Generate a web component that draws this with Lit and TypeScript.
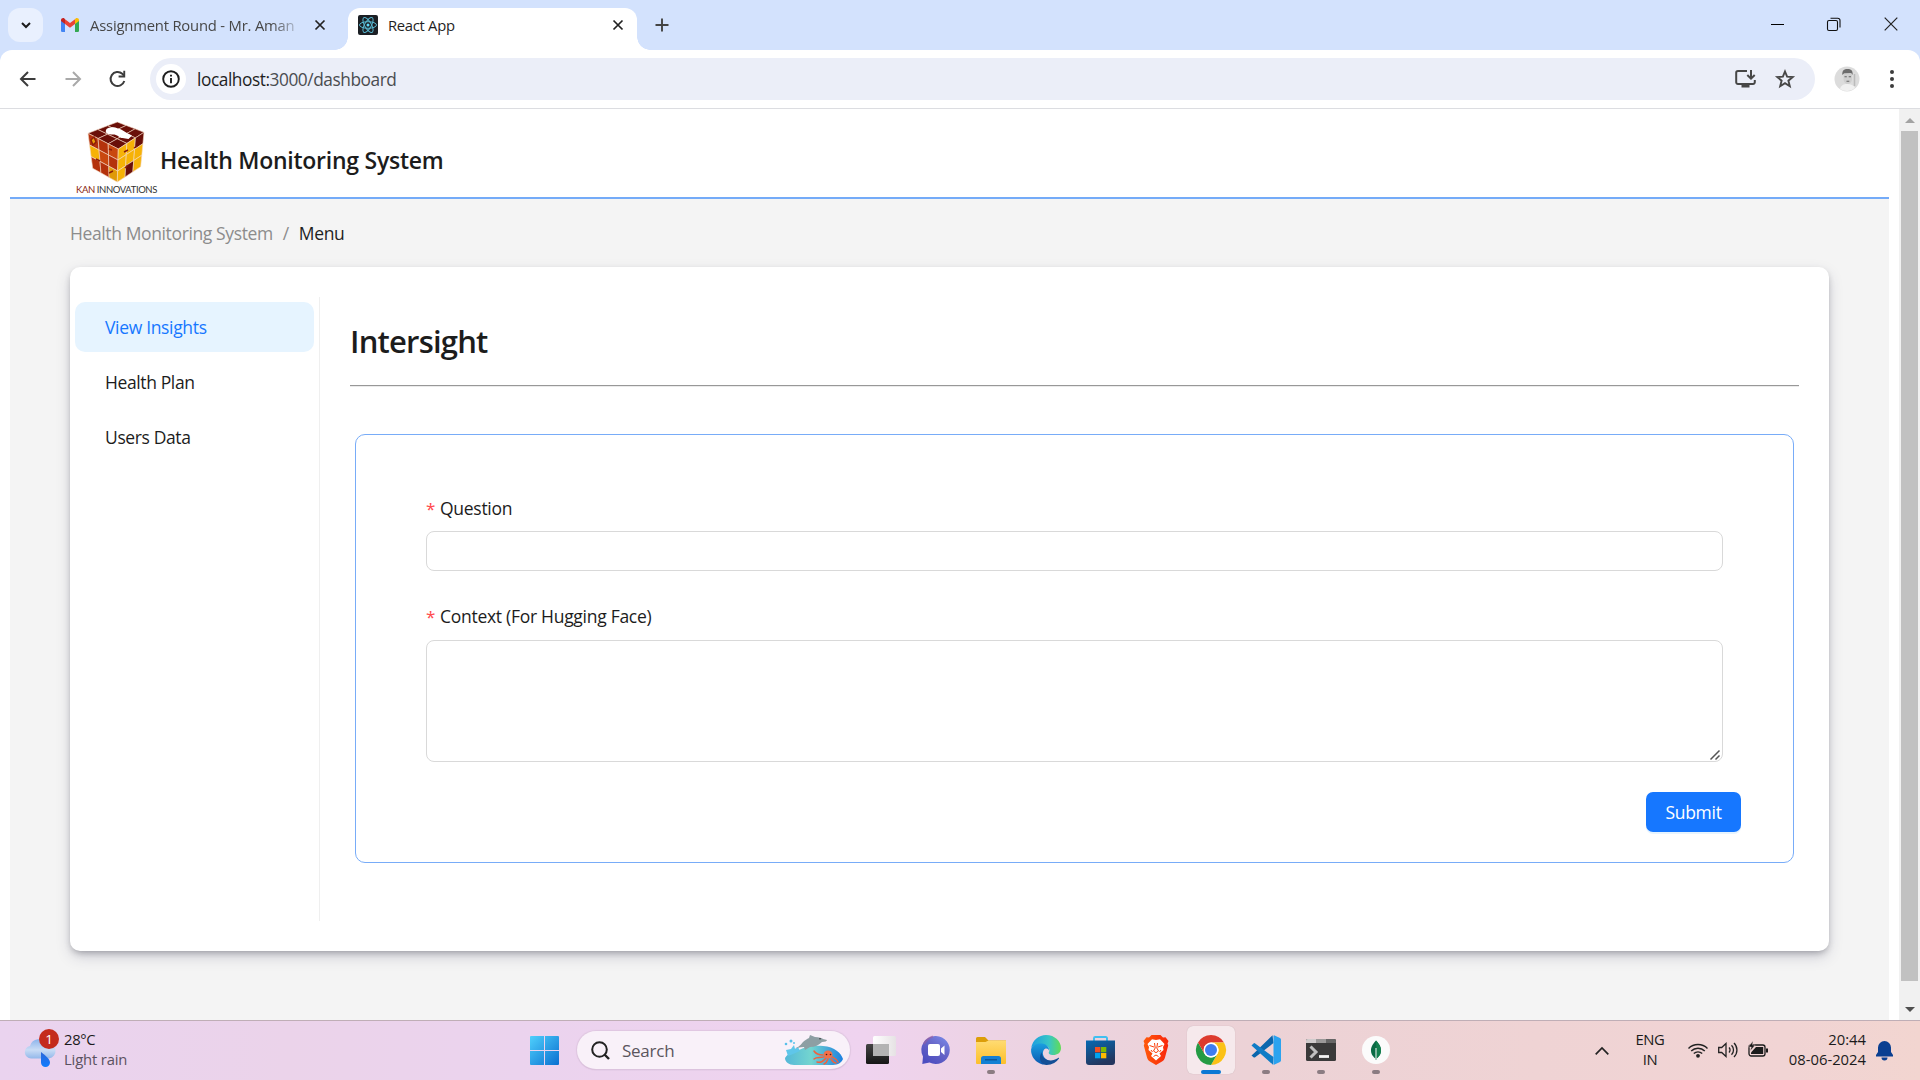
import { LitElement, html, css, svg } from "lit";
import { customElement } from "lit/decorators.js";

const base = css`
  :host { display: block; font-family: "Open Sans", "Noto Sans", sans-serif; color: #1f1f1f; }
  * { box-sizing: border-box; }
  svg { display: block; flex: none; overflow: visible; }
  span { white-space: nowrap; }
`;

type Pt = [number, number];

const mix = (a: Pt, b: Pt, t: number): Pt => [a[0] + (b[0] - a[0]) * t, a[1] + (b[1] - a[1]) * t];

/** Splits the quad a-b / d-c in a 3×3 mesh of coloured tiles. */
const face = (a: Pt, b: Pt, c: Pt, d: Pt, fills: string[]) =>
  fills.map((fill, i) => {
    const u = (i % 3) / 3;
    const v = Math.floor(i / 3) / 3;
    const at = (x: number, y: number) => mix(mix(a, b, x), mix(d, c, x), y).map((n) => n.toFixed(2)).join(",");
    const w = 1 / 3;
    return svg`<polygon points="${at(u, v)} ${at(u + w, v)} ${at(u + w, v + w)} ${at(u, v + w)}" fill=${fill} stroke="#f3d9c4" stroke-width=".6"/>`;
  });

const M = "#6a0f08", R = "#b4320c", O = "#c9480f", Y = "#f6b206", G = "#e09a08";

const cube = html`<svg width="60" height="63" viewBox="0 0 60 63">
  ${face([31.3, 2], [58, 12.3], [32.3, 29], [2, 13.3], [M, M, M, M, M, M, M, M, M])}
  ${face([2, 13.3], [32.3, 29], [31.3, 62], [6.7, 48.3], [R, R, O, Y, O, R, R, R, G])}
  ${face([32.3, 29], [58, 12.3], [54.7, 46.7], [31.3, 62], [Y, Y, M, Y, Y, Y, Y, M, Y])}
  <path d="M20 10c1-3 8-3.500 12-1.500 4 .5 6 3 9 4.500l5 2.500-3.500 3.500-6-1c-3 0-4-2.500-8-3.500-4 .5-10-.5-8.500-4.500z" fill="#fff"/>
  <path d="M5 20l3-3 2 5-3 3zM23 29l3 1M38 32l4-2M39 48l3-3M10 39l4 2M23 53l4-2M48 28l3-2" stroke="#8b1d08" stroke-width="1.400" fill="#e89a08"/>
</svg>`;

@customElement("browser-chrome")
export class BrowserChrome extends LitElement {
  static styles = [base, css`
    .strip { height: 50px; background: #d3e2fd; display: flex; align-items: flex-start; padding: 8px 0 0 8px; }
    .drop { width: 35px; height: 34px; border-radius: 12px; background: #e9f0fe; display: grid; place-items: center; }
    .tab { display: flex; align-items: center; height: 34px; font-size: 14.8px; letter-spacing: -.19px; }
    .idle { width: 305px; padding-left: 18px; color: #474747; }
    .idle .name { margin-left: 11px; width: 206px; overflow: hidden; -webkit-mask-image: linear-gradient(90deg, #000 88%, rgba(0,0,0,.25)); mask-image: linear-gradient(90deg, #000 88%, rgba(0,0,0,.25)); }
    .idle .x { margin-left: 19px; }
    .active { position: relative; width: 289px; height: 42px; padding: 0 14px 8px 10px; background: #fff; border-radius: 12px 12px 0 0; }
    .active::before, .active::after { content: ""; position: absolute; bottom: 0; width: 13px; height: 13px; }
    .active::before { left: -13px; background: radial-gradient(circle at 0 0, transparent 12.5px, #fff 13px); }
    .active::after { right: -13px; background: radial-gradient(circle at 100% 0, transparent 12.5px, #fff 13px); }
    .active .name { margin-left: 10px; flex: 1; letter-spacing: -.3px; }
    .plus { margin: 10px 0 0 18px; }
    .win { margin: 9px 22px 0 auto; display: flex; gap: 43px; }
    .under { background: #d3e2fd; }
    .bar { height: 59px; background: #fff; border-bottom: 1px solid #dcdde1; border-radius: 12px 12px 0 0; display: flex; align-items: center; padding: 0 20px 0 18px; }
    .nav { display: flex; gap: 24.500px; width: 132px; }
    .omni { flex: 1; height: 42px; border-radius: 21px; background: #ebeef8; display: flex; align-items: center; padding: 0 20px 0 6px; font-size: 17.300px; letter-spacing: -.44px; color: #4a4c50; }
    .info { width: 30px; height: 30px; border-radius: 50%; background: #fff; display: grid; place-items: center; margin-right: 11px; }
    .url { flex: 1; display: flex; }
    .host { color: #1f1f1f; }
    .acts { display: flex; gap: 19px; align-items: center; }
    .avatar { margin: 0 24px 0 19px; }
  `];

  render() {
    const x = html`<svg class="x" width="10" height="10" viewBox="0 0 10 10"><path d="M.5.5l9 9M9.5.5l-9 9" stroke="#222" stroke-width="1.7"/></svg>`;
    return html`
      <div class="strip">
        <div class="drop"><svg width="10" height="7" viewBox="0 0 10 7"><path d="M1 1l4 4 4-4" fill="none" stroke="#1b1b1b" stroke-width="2"/></svg></div>
        <div class="tab idle">
          <svg width="18" height="14" viewBox="0 0 18 14">
            <path d="M0 2v10.700A1.300 1.300 0 0 0 1.300 14H4V5.500z" fill="#4285f4"/><path d="M18 2v10.700a1.300 1.300 0 0 1-1.300 1.300H14V5.500z" fill="#34a853"/>
            <path d="M14 1.200V6l4-3V2c0-2-2.200-2.600-3.400-1.600z" fill="#fbbc04"/><path d="M4 6V1.200L9 5l5-3.800V6L9 9.800z" fill="#ea4335"/><path d="M0 2v1l4 3V1.200L3.400.4C2.200-.5 0 .2 0 2z" fill="#c5221f"/>
          </svg>
          <span class="name">Assignment Round - Mr. Aman</span>${x}
        </div>
        <div class="tab active">
          <svg width="20" height="20" viewBox="0 0 20 20"><rect width="20" height="20" rx="2" fill="#1b1f24"/>
            <g fill="none" stroke="#58b7d0" stroke-width="1"><ellipse cx="10" cy="10" rx="8.500" ry="3.300"/><ellipse cx="10" cy="10" rx="8.500" ry="3.300" transform="rotate(60 10 10)"/><ellipse cx="10" cy="10" rx="8.500" ry="3.300" transform="rotate(120 10 10)"/></g>
            <circle cx="10" cy="10" r="1.500" fill="#61dafb"/></svg>
          <span class="name">React App</span>${x}
        </div>
        <svg class="plus" width="14" height="14" viewBox="0 0 14 14"><path d="M7 .5v13M.5 7h13" stroke="#444" stroke-width="1.900"/></svg>
        <div class="win">
          <svg width="13" height="14" viewBox="0 0 13 14"><path d="M0 7.500h13" stroke="#000"/></svg>
          <svg width="14" height="14" viewBox="0 0 14 14"><rect x=".5" y="3.500" width="10" height="10" rx="1.500" fill="none" stroke="#111" stroke-width="1.100"/><path d="M3.500 1.200h7.200a2.300 2.300 0 0 1 2.300 2.300V10.500" fill="none" stroke="#111" stroke-width="1.100"/></svg>
          <svg width="14" height="14" viewBox="0 0 14 14"><path d="M.7.7l12.600 12.600M13.300.7L.7 13.300" stroke="#222" stroke-width="1.200"/></svg>
        </div>
      </div>
      <div class="under"><div class="bar">
        <div class="nav">
          <svg width="20" height="20" viewBox="0 0 20 20"><path d="M17.500 10H3.500M10 3L3 10l7 7" fill="none" stroke="#3c3c3c" stroke-width="2"/></svg>
          <svg width="20" height="20" viewBox="0 0 20 20"><path d="M2.500 10h14M10 3l7 7-7 7" fill="none" stroke="#a9a9a9" stroke-width="2"/></svg>
          <svg width="20" height="20" viewBox="0 0 20 20"><path d="M17.300 12A7 7 0 1 1 15.300 4.800L17 6.500" fill="none" stroke="#3c3c3c" stroke-width="2"/><path d="M18.200 1.800v6.600h-6.600v-1.900h4.700v-4.700z" fill="#3c3c3c"/></svg>
        </div>
        <div class="omni">
          <div class="info"><svg width="18" height="18" viewBox="0 0 18 18"><circle cx="9" cy="9" r="7.800" fill="none" stroke="#1f1f1f" stroke-width="1.900"/><path d="M9 8v5.200M9 4.700v1.900" stroke="#1f1f1f" stroke-width="1.900"/></svg></div>
          <div class="url"><span><span class="host">localhost:</span>3000/dashboard</span></div>
          <div class="acts">
            <svg width="21" height="20" viewBox="0 0 21 20"><path d="M12 2H3a1.800 1.800 0 0 0-1.800 1.800v9.400A1.800 1.800 0 0 0 3 15h15a1.800 1.800 0 0 0 1.800-1.800V11" fill="none" stroke="#474747" stroke-width="2"/><path d="M6.500 15h8v3.500h-8z" fill="#474747"/><path d="M16 1v8M12.300 6l3.700 3.700L19.700 6" fill="none" stroke="#474747" stroke-width="2"/></svg>
            <svg width="20" height="20" viewBox="0 0 20 20"><path d="M10 2.500l2.100 5.200 5.600.400-4.300 3.600 1.400 5.500L10 14.200l-4.800 3 1.400-5.500-4.300-3.600 5.600-.4z" fill="none" stroke="#474747" stroke-width="1.900"/></svg>
          </div>
        </div>
        <svg class="avatar" width="26" height="26" viewBox="0 0 26 26"><circle cx="13" cy="13" r="12.500" fill="#dcdcdc"/><path d="M6 23c1-4 4-5 7-5s7 1 8 4a12.500 12.500 0 0 1-15 1z" fill="#f1f1f1"/><path d="M9.500 7h8.500v6c0 3-2.500 5-4.300 5S9.500 16 9.500 13z" fill="#cfcfcf"/><path d="M8.300 9C8 4.500 10 3 13.500 3S19 4.500 18.700 9l-1.500-2-7 .3z" fill="#6c6c6c"/><path d="M10.500 10.700h2.300M14.700 10.700H17M12.500 15.300h2.800" stroke="#666" stroke-width="1.100"/><path d="M20.500 8v12" stroke="#bbb" stroke-width="1.500"/></svg>
        <svg width="16" height="20" viewBox="0 0 16 20"><g fill="#3c3c3c"><circle cx="8" cy="3" r="2"/><circle cx="8" cy="10" r="2"/><circle cx="8" cy="17" r="2"/></g></svg>
      </div></div>`;
  }
}

@customElement("health-page")
export class HealthPage extends LitElement {
  static styles = [base, css`
    .view { height: 911px; display: flex; background: #fff; font-size: 17.500px; letter-spacing: -.38px; color: #1c1c1c; }
    .page { flex: 1; margin: 0 10px; background: #f4f4f4; }
    .head { height: 90px; background: #fff; border-bottom: 2px solid #74abf8; display: flex; padding-left: 66px; }
    .brand { width: 84px; padding-top: 11px; display: flex; flex-direction: column; align-items: flex-start; }
    .brand svg { margin-left: 10px; }
    .brand .cap { font: 9.500px/12px "Lato", sans-serif; letter-spacing: -.4px; color: #333; margin-top: 1px; }
    .cap b { font-weight: 400; color: #8c1f10; }
    .title { font-size: 23px; font-weight: 600; line-height: 30px; margin: 36px 0 0; letter-spacing: -.25px; }
    .crumbs { display: flex; height: 68px; align-items: center; padding-left: 60px; color: #8c8c8c; gap: 10px; }
    .crumbs .now { color: #1f1f1f; }
    .card { margin: 0 60px; height: 684px; border-radius: 10px; background: #fff; padding: 30px; padding-left: 0; display: flex;
      box-shadow: rgba(50,50,93,.25) 0 6px 15px -2px, rgba(0,0,0,.3) 0 3px 7px -2px; }
    .menu { width: 250px; border-right: 1px solid #efefef; padding: 5px 5px; display: flex; flex-direction: column; gap: 5px; }
    .item { height: 50px; border-radius: 10px; display: flex; align-items: center; padding-left: 30px; }
    .on { background: #e6f4ff; color: #1677ff; letter-spacing: -.33px; }
    .main { flex: 1; padding-left: 30px; }
    .h1 { font-size: 31px; font-weight: 600; line-height: 40px; margin-top: 24px; display: block; letter-spacing: -.8px; }
    .rule { height: 2px; margin-top: 24px; border-top: 1px solid #989898; border-bottom: 1px solid #ebebeb; }
    .form { margin: 47px 5px 0; height: 429px; border: 1px solid #78acf8; border-radius: 10px; padding: 58px 70px 0; display: flex; flex-direction: column; letter-spacing: -.28px; }
    .lab { height: 30px; display: flex; align-items: center; gap: 6px; }
    .star { color: #ff4d4f; width: 8px; font: 17px/17px "Noto Sans", sans-serif; }
    .input { height: 40px; border: 1px solid #d9d9d9; border-radius: 8px; margin: 8px 0 30px; }
    .area { height: 122px; border: 1px solid #d9d9d9; border-radius: 8px; margin: 9px 0 30px; display: flex; align-items: flex-end; justify-content: flex-end; padding: 1px 2px; }
    .btn { align-self: flex-end; margin-right: -18px; width: 95px; height: 40px; border-radius: 7px; background: #1677ff; color: #fff; display: grid; place-items: center; box-shadow: 0 2px 0 rgba(5,145,255,.1); }
    .scroll { width: 21px; background: #f1f1f1; display: flex; flex-direction: column; align-items: center; }
    .up { margin: 9px 0 8px; }
    .thumb { width: 17px; height: 850px; background: #c1c1c1; }
    .down { margin-top: 26px; }
  `];

  render() {
    return html`<div class="view">
      <div class="page">
        <div class="head">
          <div class="brand">${cube}<span class="cap"><b>KAN</b> INNOVATIONS</span></div>
          <span class="title">Health Monitoring System</span>
        </div>
        <div class="crumbs"><span>Health Monitoring System</span><span>/</span><span class="now">Menu</span></div>
        <div class="card">
          <div class="menu">
            <div class="item on">View Insights</div>
            <div class="item">Health Plan</div>
            <div class="item">Users Data</div>
          </div>
          <div class="main">
            <span class="h1">Intersight</span>
            <div class="rule"></div>
            <div class="form">
              <div class="lab"><span class="star">*</span><span>Question</span></div>
              <div class="input"></div>
              <div class="lab"><span class="star">*</span><span>Context (For Hugging Face)</span></div>
              <div class="area"><svg width="10" height="10" viewBox="0 0 10 10"><path d="M.5 9.500l9-9M5.500 9.500l4-4" stroke="#555" stroke-width="1.500"/></svg></div>
              <div class="btn">Submit</div>
            </div>
          </div>
        </div>
      </div>
      <div class="scroll">
        <svg class="up" width="10" height="5" viewBox="0 0 10 5"><path d="M0 5l5-5 5 5z" fill="#a3a3a3"/></svg>
        <div class="thumb"></div>
        <svg class="down" width="10" height="5" viewBox="0 0 10 5"><path d="M0 0l5 5 5-5z" fill="#505050"/></svg>
      </div>
    </div>`;
  }
}

const icons = {
  taskview: svg`<svg width="30" height="28" viewBox="0 0 30 28"><defs><linearGradient id="tv" x2="0" y2="1"><stop stop-color="#444"/><stop offset="1" stop-color="#161616"/></linearGradient><linearGradient id="tw"><stop stop-color="#fff"/><stop offset="1" stop-color="#e6e2e4"/></linearGradient></defs><rect y="8" width="23" height="20" rx="1.500" fill="url(#tv)"/><rect x="7" width="23" height="20" rx="1.500" fill="url(#tw)"/><rect x="7" y="8" width="16" height="12" fill="#b3b3b3"/></svg>`,
  chat: svg`<svg width="30" height="28" viewBox="0 0 30 28"><defs><linearGradient id="ch" x1="1" y1="0" x2=".3" y2="1"><stop stop-color="#7b8fee"/><stop offset=".5" stop-color="#6765c7"/><stop offset="1" stop-color="#4c4ec0"/></linearGradient></defs><path d="M15 0a14 14 0 1 1-6.500 26.500L1.300 28 2 20.500A14 14 0 0 1 15 0z" fill="url(#ch)"/><path d="M3 8A14 14 0 0 1 12 .5" stroke="#9a5f9f" stroke-width="2" opacity=".6" fill="none"/><rect x="7" y="8" width="12" height="12" rx="2" fill="#fff"/><path d="M20 12.500l3.500-3v9.500l-3.500-3z" fill="#fff"/></svg>`,
  folder: svg`<svg width="30" height="27" viewBox="0 0 30 27"><defs><linearGradient id="fo" x2="0" y2="1"><stop stop-color="#ffdb72"/><stop offset="1" stop-color="#fcbf2a"/></linearGradient></defs><path d="M0 1.500A1.500 1.500 0 0 1 1.500 0H9l3.500 3.500H30v5H0z" fill="#dc9e09"/><path d="M0 5h9.500l3-1.500H30V26a1 1 0 0 1-1 1H1a1 1 0 0 1-1-1z" fill="url(#fo)"/><path d="M5 27v-5.500A2.500 2.500 0 0 1 7.500 19h15a2.500 2.500 0 0 1 2.500 2.500V27z" fill="#1480d4"/><path d="M9 22.800h12" stroke="#0b4f8c" stroke-width="1.200"/></svg>`,
  edge: svg`<svg width="30" height="30" viewBox="0 0 30 30"><defs><linearGradient id="ed"><stop stop-color="#1c9de0"/><stop offset=".6" stop-color="#38c6c6"/><stop offset="1" stop-color="#62dc54"/></linearGradient><linearGradient id="ee" x2="0" y2="1"><stop stop-color="#1a9fe0"/><stop offset="1" stop-color="#0b58b0"/></linearGradient></defs><path d="M.2 13C1.500 5 8 0 15 0c9 0 15 6.500 15 13 0 5-4 7-7.500 7-4 0-5.500-1.500-4.500-3 1-2 .5-6-4.500-7C8 9 2 10 .2 13z" fill="url(#ed)"/><path d="M.1 14C1.500 10.500 5.500 8 10.500 8.500c5 .500 8 3.500 7.500 7-.5-2-4-3-5.500 0-2 4 1 9.500 7 10.500-2 2.500-5 4-8 3.500A15 15 0 0 1 .1 14z" fill="url(#ee)"/><path d="M11 17c-1 5 4 9 9 8.500 4-.5 6-2 7.500-2.700.5-.2.800.2.500.7A15 15 0 0 1 15 30c-6-1-8-8-4-13z" fill="#134f96"/></svg>`,
  store: svg`<svg width="29" height="29" viewBox="0 0 29 29"><defs><linearGradient id="st" x2=".4" y2="1"><stop stop-color="#0669b2"/><stop offset="1" stop-color="#23365e"/></linearGradient></defs><path d="M8 6V2.200A1.200 1.200 0 0 1 9.200 1h10.600A1.200 1.200 0 0 1 21 2.200V6" fill="none" stroke="#41bff0" stroke-width="2"/><path d="M0 4.500h29V26a3 3 0 0 1-3 3H3a3 3 0 0 1-3-3z" fill="url(#st)"/><rect x="9" y="11" width="5.300" height="5.300" fill="#f25022"/><rect x="15" y="11" width="5.300" height="5.300" fill="#7fba00"/><rect x="9" y="17" width="5.300" height="5.300" fill="#00a4ef"/><rect x="15" y="17" width="5.300" height="5.300" fill="#ffb900"/></svg>`,
  brave: svg`<svg width="26" height="30" viewBox="0 0 26 30"><defs><linearGradient id="br"><stop stop-color="#ff5a0a"/><stop offset="1" stop-color="#f8250c"/></linearGradient></defs><path d="M8.500 0h9l2.500 2.500 2.500-.300L25.500 6l-1 2.500.7 2L22 22.500c-.5 2-1.500 3-3 4L13 30l-6-3.500c-1.500-1-2.500-2-3-4L.8 10.500l.7-2L.5 6l3-3.800L6 2.500z" fill="url(#br)"/><path d="M13 5l4-.8L21.500 9l-1.500 3 .5 3-4 3.500L18 21l-5 4.500L8 21l1.500-2.500-4-3.500.5-3L4.500 9 9 4.200z" fill="#fff"/><path d="M6.500 10.500l4.500 1.500M19.500 10.500L15 12M11.500 8l.7 5-1.700 3 2.500 1.700L15.500 16l-1.700-3 .7-5M8 15l1.500 2M18 15l-1.500 2M10.500 21.500L13 20l2.500 1.500" fill="none" stroke="#fb3f0b" stroke-width="1"/></svg>`,
  chrome: svg`<svg width="30" height="30" viewBox="-15 -15 30 30"><circle r="15" fill="#fff"/><path d="M-13-7.500A15 15 0 0 1 13-7.500H0A7.500 7.500 0 0 0-6.500-3.750z" fill="#dd3b2e"/><path d="M13-7.500A15 15 0 0 1 0 15L6.500 3.750A7.500 7.500 0 0 0 0-7.500z" fill="#fbc116"/><path d="M0 15A15 15 0 0 1-13-7.500L-6.500 3.750A7.500 7.500 0 0 0 6.500 3.750z" fill="#259b44"/><path d="M-13-7.500L-6.500 3.750V-3.750L0-7.500z" fill="#dd3b2e"/><circle r="7.500" fill="#fff"/><circle r="6" fill="#3f7df0"/></svg>`,
  code: svg`<svg width="30" height="30" viewBox="0 0 30 30"><path d="M21.500.3L3 18.300 .5 20.500l2 1.700a1.300 1.300 0 0 0 1.700 0L22.500 8z" fill="#0a66ad"/><path d="M22 29.800L.5 10.500l2-2a1.300 1.300 0 0 1 1.700-.1L22.500 22z" fill="#0f7cc6"/><path d="M21.500.2c.5-.3 1-.2 1.500 0l6 2.800c.6.300 1 .9 1 1.500v21c0 .6-.4 1.200-1 1.500l-6 2.800c-.5.200-1 .3-1.500 0 .7.300 1.500-.3 1.500-1V1.200c0-.7-.8-1.300-1.500-1z" fill="#2ba3ef"/><path d="M22.500 1v28h1V1z" fill="#2ba3ef"/></svg>`,
  term: svg`<svg width="30" height="22" viewBox="0 0 30 22"><rect width="30" height="22" rx="1.500" fill="#3a3a3a"/><path d="M0 4V1.500A1.500 1.500 0 0 1 1.500 0H10v4z" fill="#d0cccd"/><path d="M10 0h10v4H10z" fill="#9b9999"/><path d="M20 0h8.500A1.500 1.500 0 0 1 30 1.500V4H20z" fill="#666"/><path d="M4.500 7.500l5.500 5.500-5.500 5.500" fill="none" stroke="#bfbfbf" stroke-width="3"/><path d="M13 17.500h10" stroke="#f2f2f2" stroke-width="2.800"/></svg>`,
  mongo: svg`<svg width="28" height="28" viewBox="0 0 28 28"><circle cx="14" cy="14" r="14" fill="#fbfbfb"/><path d="M14 4.500c4 4.500 5 7 5 10 0 4-2.500 6.500-4.500 8v1.500h-1V22.500c-2-1.500-4.500-4-4.500-8 0-3 1-5.500 5-10z" fill="#0a6b45"/><path d="M14 4.500c4 4.500 5 7 5 10 0 4-2.500 6.500-4.500 8z" fill="#13804f"/><path d="M14 12v12" stroke="#c3dccf" stroke-width="1.300"/></svg>`,
};

@customElement("task-bar")
export class TaskBar extends LitElement {
  static styles = [base, css`
    .bar { height: 60px; border-top: 1px solid #bfaeb6; display: flex; align-items: center; font-size: 14.800px; letter-spacing: -.05px; line-height: 20px; color: #1b1b1b;
      background: linear-gradient(90deg, #ead3ef 0, #ebd3ea 15%, #ebd3ee 27%, #efd3ef 45%, #ecd3df 55%, #ecd2d6 65%, #efd3d4 80%, #f1d4d4 93%, #f2d5d0 100%); }
    .weather { width: 492px; margin-left: 25px; display: flex; align-items: center; gap: 9px; letter-spacing: -.3px; }
    .two { display: flex; flex-direction: column; padding-bottom: 4px; }
    .dim { color: #5a5260; letter-spacing: -.15px; }
    .slot { width: 55px; height: 59px; display: flex; flex-direction: column; align-items: center; justify-content: center; position: relative; }
    .run::after { content: ""; position: absolute; left: 24px; bottom: 6px; width: 8px; height: 4px; border-radius: 2px; background: #8b7c82; }
    .cur::before { content: ""; position: absolute; inset: 5px 3px 6px 4px; border-radius: 6px; background: #f6e9ec; box-shadow: 0 0 1px rgba(0,0,0,.2); }
    .cur::after { content: ""; position: absolute; left: 18px; bottom: 6px; width: 20px; height: 4px; border-radius: 2px; background: #0a78d4; }
    .slot svg { margin-bottom: 1px; }
    .cur svg { position: relative; }
    .search { width: 273px; height: 38px; border-radius: 19px; margin: 0 3px 1px 5px; background: #f9f1f9; box-shadow: 0 0 1px 1px #dfc6e0, 0 1px 1px #bba3c0; display: flex; align-items: center; padding: 0 6px 0 14px; font-size: 17px; letter-spacing: -.25px; color: #5b555d; }
    .hint { flex: 1; padding: 1px 0 0 12px; }
    .tray { flex: 1; display: flex; align-items: center; justify-content: flex-end; padding-right: 27px; }
    .lang { width: 44px; margin: 0 16px 0 19px; align-items: center; letter-spacing: -.4px; }
    .when { width: 83px; align-items: flex-end; margin: 0 10px 0 15px; letter-spacing: 0; }
    .sys { display: flex; gap: 10px; align-items: center; padding-bottom: 2px; }
    .bell { margin-bottom: 1px; }
  `];

  render() {
    const slot = (icon: unknown, cls = "") => html`<div class="slot ${cls}">${icon}</div>`;
    return html`<div class="bar">
      <div class="weather">
        <svg width="30" height="40" viewBox="0 0 30 40"><defs><linearGradient id="cl" x2="0" y2="1"><stop stop-color="#8db4ec"/><stop offset=".55" stop-color="#c9dcf5"/><stop offset="1" stop-color="#93b8ea"/></linearGradient><linearGradient id="dr" x2="0" y2="1"><stop stop-color="#2c66d8"/><stop offset="1" stop-color="#0f7dff"/></linearGradient></defs>
          <path d="M6 27.500A6.300 6.300 0 0 1 5 15 9.500 9.500 0 0 1 22 12.500a7.500 7.500 0 0 1 2 15z" fill="url(#cl)"/><path d="M16 21c5 4 9 7 9 10.500a4.400 4.400 0 0 1-9 0z" fill="url(#dr)"/>
          <circle cx="24" cy="8" r="10" fill="#c42b1c"/><text x="24" y="13" text-anchor="middle" font-size="13.500" fill="#fff">1</text></svg>
        <div class="two"><span>28°C</span><span class="dim">Light rain</span></div>
      </div>
      ${slot(html`<svg width="29" height="29" viewBox="0 0 29 29"><defs><linearGradient id="wi" x2="1" y2="1"><stop stop-color="#4fd0fc"/><stop offset="1" stop-color="#0a6fd0"/></linearGradient></defs><path d="M1 0h13v14H0V1a1 1 0 0 1 1-1zM15 0h13a1 1 0 0 1 1 1v13H15zM0 15h14v14H1a1 1 0 0 1-1-1zM15 15h14v13a1 1 0 0 1-1 1H15z" fill="url(#wi)"/></svg>`)}
      <div class="search">
        <svg width="19" height="19" viewBox="0 0 19 19"><circle cx="8.500" cy="8.500" r="7.300" fill="none" stroke="#222" stroke-width="2"/><path d="M13.500 13.500l4.500 4.500" stroke="#222" stroke-width="2.400"/></svg>
        <span class="hint">Search</span>
        <svg width="60" height="32" viewBox="0 0 60 32"><defs><linearGradient id="se" x2="1"><stop stop-color="#54b8d8"/><stop offset=".45" stop-color="#74d5cf"/><stop offset="1" stop-color="#1c80e0"/></linearGradient></defs>
          <path d="M1 24c4-6 8-6 14-8 6-3 14-5 24-4 12 1 18 7 20 13-1 3-5 6-10 6H10c-5 0-9-3-9-7z" fill="url(#se)"/>
          <path d="M2 16l2 6 5-2 7-3-2-4-3 2-1-4-3 4z" fill="#5fc6ea"/><circle cx="2" cy="10" r="1.300" fill="#58c0ea"/><circle cx="7" cy="7" r="1.500" fill="#58c0ea"/><circle cx="10" cy="9" r="1" fill="#58c0ea"/>
          <path d="M9 15c4-1 7-3 10-7 2-2 4-3 6-4l1-3 5 2c4 0 7 1 8 2l4 1c0 1-2 2-5 2-3 3-7 5-12 5l-5 3-1-3c-4 0-8 1-11 2z" fill="#8d9fa3"/><circle cx="36" cy="4.800" r=".7" fill="#222"/>
          <g fill="none" stroke="#f0623d" stroke-width="1.500" stroke-linecap="round"><path d="M42 22c-4 3-9 0-12 3M42 24c-3 3-4 5-9 4M44 25c-1 3-2 4-4 5M47 25c2 3 3 4 5 4M48 23c4 2 5 2 6 5M39 21c-4 0-7-1-9-4"/></g><ellipse cx="44" cy="20.500" rx="4.500" ry="4" fill="#f46f47"/><circle cx="42.500" cy="20.500" r=".8" fill="#42201a"/><circle cx="46.500" cy="20.500" r=".8" fill="#42201a"/></svg>
      </div>
      ${slot(icons.taskview)}${slot(icons.chat)}${slot(icons.folder, "run")}${slot(icons.edge)}${slot(icons.store)}${slot(icons.brave)}${slot(icons.chrome, "cur")}${slot(icons.code, "run")}${slot(icons.term, "run")}${slot(icons.mongo, "run")}
      <div class="tray">
        <svg width="14" height="8" viewBox="0 0 14 8"><path d="M.7 7.300L7 1l6.300 6.300" fill="none" stroke="#222" stroke-width="1.700"/></svg>
        <div class="two lang"><span>ENG</span><span>IN</span></div>
        <div class="sys">
          <svg width="20" height="16" viewBox="0 0 20 16"><g fill="none" stroke="#222" stroke-width="1.400"><path d="M.5 6.500a13.400 13.400 0 0 1 19 0M3.200 9a9.600 9.600 0 0 1 13.600 0M5.800 11.600a6 6 0 0 1 8.400 0"/></g><circle cx="10" cy="13.800" r="1.900" fill="#222"/></svg>
          <svg width="20" height="16" viewBox="0 0 20 16"><g fill="none" stroke="#222" stroke-width="1.300"><path d="M.7 5.500h3L8 1.500v13L3.700 10.500h-3z"/><path d="M11 5.500a3.500 3.500 0 0 1 0 5M13.500 3.300a6.500 6.500 0 0 1 0 9.400M16 1a9.800 9.800 0 0 1 0 14"/></g></svg>
          <svg width="20" height="16" viewBox="0 0 20 16"><rect x="1" y="3" width="16" height="11" rx="2.200" fill="none" stroke="#1b1b1b" stroke-width="1.300"/><path d="M8 5h7.200v7H3V10.500z" fill="#1b1b1b"/><path d="M18 6.500h2v4h-2z" fill="#1b1b1b"/><path d="M5-1L.3 5h3L2.200 9 7.200 3H4.400z" fill="#1b1b1b" stroke="#f0d3d4" stroke-width=".4"/></svg>
        </div>
        <div class="two when"><span>20:44</span><span>08-06-2024</span></div>
        <svg class="bell" width="17" height="19" viewBox="0 0 17 19"><path d="M8.500 0a6.500 6.500 0 0 1 6.500 6.500V11l2 3v1.500H0V14l2-3V6.500A6.500 6.500 0 0 1 8.500 0z" fill="#0a3f91"/><path d="M5.500 16.500h6a3 3 0 0 1-6 0z" fill="#0a3f91"/></svg>
      </div>
    </div>`;
  }
}

@customElement("app-root")
export class AppRoot extends LitElement {
  static styles = css`:host { display: block; width: 1920px; height: 1080px; overflow: hidden; background: #fff; }`;
  render() {
    return html`<browser-chrome></browser-chrome><health-page></health-page><task-bar></task-bar>`;
  }
}
